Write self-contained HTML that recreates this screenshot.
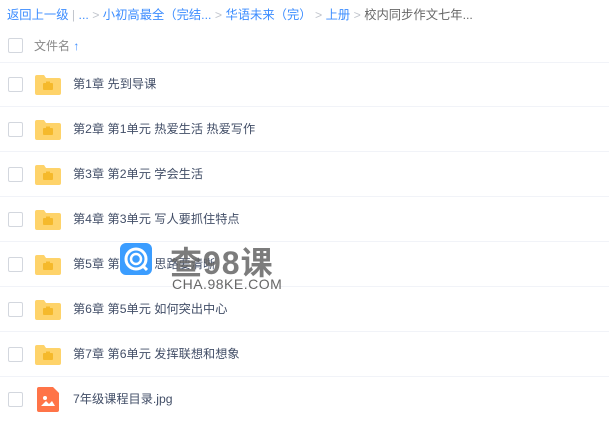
<!DOCTYPE html>
<html><head><meta charset="utf-8"><style>
body{margin:0;width:609px;height:420px;overflow:hidden;background:#fff;font-family:"Liberation Sans","Noto Sans CJK SC",sans-serif;font-size:12px;color:#424e67;position:relative}
.bc{position:absolute;left:7px;top:5px;color:#3b8cff;white-space:nowrap;font-size:12.3px}
.bc .g{color:#c0c4cc}
.bc .d{color:#666}
.cb{position:absolute;left:8px;width:13px;height:13px;border:1px solid #d3d7de;border-radius:2px;background:#fff}
.hd{position:absolute;left:34px;top:37px;color:#888}
.line{position:absolute;left:0;width:609px;height:1px;background:#f1f3f8}
.row{position:absolute;left:0;width:609px;height:45px}
.row .t{position:absolute;left:73px;top:0;line-height:45px;color:#424e67;font-size:12.2px}
.fold{position:absolute;left:35px;top:13px;width:26px;height:20px}
</style></head><body>
<div class="bc">返回上一级 <span class="g">|</span> <span style="color:#3b8cff">...</span> <span class="g">&gt;</span> 小初高最全（完结... <span class="g">&gt;</span> 华语未来（完） <span class="g">&gt;</span> 上册 <span class="g">&gt;</span> <span class="d">校内同步作文七年...</span></div>
<div class="cb" style="top:38px"></div>
<div class="hd">文件名 <span style="color:#3b8cff;font-weight:bold">↑</span></div>
<div class="line" style="top:62px"></div>

<div class="row" style="top:62px"><div class="cb" style="top:15px"></div><svg class="fold" viewBox="0 0 26 20"><path d="M0 2a2 2 0 0 1 2-2h7l2 3h13a2 2 0 0 1 2 2v13a2 2 0 0 1-2 2H2a2 2 0 0 1-2-2z" fill="#fed36a"/><rect x="8" y="8" width="10" height="7" rx="1" fill="#f5b92b"/><rect x="11" y="6.5" width="4" height="2" fill="#f5b92b"/></svg><div class="t">第1章 先到导课</div></div>
<div class="line" style="top:106px"></div>
<div class="row" style="top:107px"><div class="cb" style="top:15px"></div><svg class="fold" viewBox="0 0 26 20"><path d="M0 2a2 2 0 0 1 2-2h7l2 3h13a2 2 0 0 1 2 2v13a2 2 0 0 1-2 2H2a2 2 0 0 1-2-2z" fill="#fed36a"/><rect x="8" y="8" width="10" height="7" rx="1" fill="#f5b92b"/><rect x="11" y="6.5" width="4" height="2" fill="#f5b92b"/></svg><div class="t">第2章 第1单元 热爱生活 热爱写作</div></div>
<div class="line" style="top:151px"></div>
<div class="row" style="top:152px"><div class="cb" style="top:15px"></div><svg class="fold" viewBox="0 0 26 20"><path d="M0 2a2 2 0 0 1 2-2h7l2 3h13a2 2 0 0 1 2 2v13a2 2 0 0 1-2 2H2a2 2 0 0 1-2-2z" fill="#fed36a"/><rect x="8" y="8" width="10" height="7" rx="1" fill="#f5b92b"/><rect x="11" y="6.5" width="4" height="2" fill="#f5b92b"/></svg><div class="t">第3章 第2单元 学会生活</div></div>
<div class="line" style="top:196px"></div>
<div class="row" style="top:197px"><div class="cb" style="top:15px"></div><svg class="fold" viewBox="0 0 26 20"><path d="M0 2a2 2 0 0 1 2-2h7l2 3h13a2 2 0 0 1 2 2v13a2 2 0 0 1-2 2H2a2 2 0 0 1-2-2z" fill="#fed36a"/><rect x="8" y="8" width="10" height="7" rx="1" fill="#f5b92b"/><rect x="11" y="6.5" width="4" height="2" fill="#f5b92b"/></svg><div class="t">第4章 第3单元 写人要抓住特点</div></div>
<div class="line" style="top:241px"></div>
<div class="row" style="top:242px"><div class="cb" style="top:15px"></div><svg class="fold" viewBox="0 0 26 20"><path d="M0 2a2 2 0 0 1 2-2h7l2 3h13a2 2 0 0 1 2 2v13a2 2 0 0 1-2 2H2a2 2 0 0 1-2-2z" fill="#fed36a"/><rect x="8" y="8" width="10" height="7" rx="1" fill="#f5b92b"/><rect x="11" y="6.5" width="4" height="2" fill="#f5b92b"/></svg><div class="t">第5章 第4单元 思路要清晰</div></div>
<div class="line" style="top:286px"></div>
<div class="row" style="top:287px"><div class="cb" style="top:15px"></div><svg class="fold" viewBox="0 0 26 20"><path d="M0 2a2 2 0 0 1 2-2h7l2 3h13a2 2 0 0 1 2 2v13a2 2 0 0 1-2 2H2a2 2 0 0 1-2-2z" fill="#fed36a"/><rect x="8" y="8" width="10" height="7" rx="1" fill="#f5b92b"/><rect x="11" y="6.5" width="4" height="2" fill="#f5b92b"/></svg><div class="t">第6章 第5单元 如何突出中心</div></div>
<div class="line" style="top:331px"></div>
<div class="row" style="top:332px"><div class="cb" style="top:15px"></div><svg class="fold" viewBox="0 0 26 20"><path d="M0 2a2 2 0 0 1 2-2h7l2 3h13a2 2 0 0 1 2 2v13a2 2 0 0 1-2 2H2a2 2 0 0 1-2-2z" fill="#fed36a"/><rect x="8" y="8" width="10" height="7" rx="1" fill="#f5b92b"/><rect x="11" y="6.5" width="4" height="2" fill="#f5b92b"/></svg><div class="t">第7章 第6单元 发挥联想和想象</div></div>
<div class="line" style="top:376px"></div>
<div class="row" style="top:377px"><div class="cb" style="top:15px"></div><svg style="position:absolute;left:37px;top:10px" width="22" height="25" viewBox="0 0 22 25"><path d="M2 0h14l6 6v17a2 2 0 0 1-2 2H2a2 2 0 0 1-2-2V2a2 2 0 0 1 2-2z" fill="#ff7448"/><circle cx="8" cy="11" r="2" fill="#fff"/><path d="M4 19l5-5 3 3 3-3 3 5z" fill="#fff"/></svg><div class="t">7年级课程目录.jpg</div></div>

<svg style="position:absolute;left:120px;top:243px" width="32" height="32" viewBox="0 0 32 32"><rect width="32" height="32" rx="6" fill="#3b9dff"/><circle cx="16" cy="16" r="10" fill="none" stroke="#fff" stroke-width="3"/><circle cx="16" cy="16" r="5" fill="none" stroke="#fff" stroke-width="2.5"/><path d="M22 22l5 5" stroke="#fff" stroke-width="3"/></svg>
<div style="position:absolute;left:170px;top:238px;font-size:32px;font-weight:bold;color:#666;letter-spacing:1px;opacity:.85;font-family:'Liberation Sans','Noto Sans CJK SC',sans-serif">查98课</div>
<div style="position:absolute;left:172px;top:276px;font-size:14px;color:#666;letter-spacing:0.5px">CHA.98KE.COM</div>
</body></html>
